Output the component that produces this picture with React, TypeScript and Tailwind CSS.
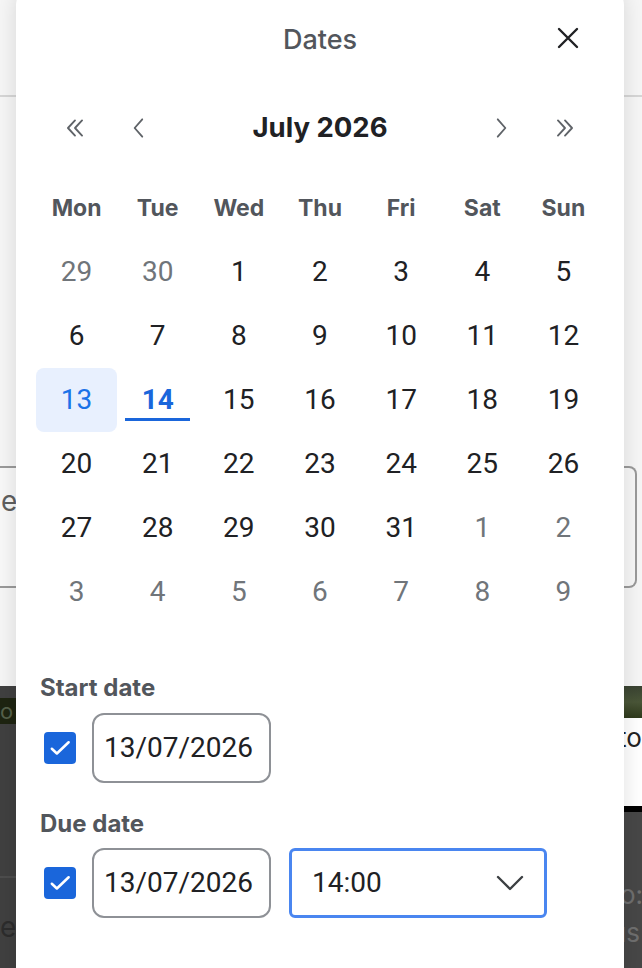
import { useState } from 'react'

type TDay = { day: number; muted?: boolean }

const weekdays = ['Mon', 'Tue', 'Wed', 'Thu', 'Fri', 'Sat', 'Sun']

// July 2026 starts on a Wednesday, padded with June / August days
function buildMonth(): TDay[] {
  const days: TDay[] = [{ day: 29, muted: true }, { day: 30, muted: true }]
  for (let d = 1; d <= 31; d++) days.push({ day: d })
  let next = 1
  while (days.length < 42) days.push({ day: next++, muted: true })
  return days
}

function Chevron({ dir, double }: { dir: 'left' | 'right'; double?: boolean }) {
  const flip = dir === 'right' ? 'scale(-1,1) translate(-24,0)' : undefined
  return (
    <svg width="26" height="26" viewBox="0 0 24 24" fill="none" stroke="#5f6368" strokeWidth="1.7" strokeLinecap="round" strokeLinejoin="round">
      <g transform={flip}>
        {double ? (
          <path d="M12 5l-6.5 7 6.5 7M18.5 5L12 12l6.5 7" />
        ) : (
          <path d="M15 4l-7 8 7 8" />
        )}
      </g>
    </svg>
  )
}

function Checkbox({ checked, onToggle }: { checked: boolean; onToggle: () => void }) {
  return (
    <button
      type="button"
      onClick={onToggle}
      className={`w-[32px] h-[32px] rounded-[4px] flex items-center justify-center shrink-0 ${checked ? 'bg-[#1a66db]' : 'border-2 border-[#5f6368] bg-white'}`}
    >
      {checked && (
        <svg width="24" height="24" viewBox="0 0 20 20" fill="none" stroke="white" strokeWidth="2.1" strokeLinecap="round" strokeLinejoin="round">
          <path d="M3.2 10.6l4.2 4L17.2 5.2" />
        </svg>
      )}
    </button>
  )
}

function DateBox({ value }: { value: string }) {
  return (
    <div className="w-[179px] h-[70px] rounded-[12px] border-2 border-[#8e9196] flex items-center pl-[10px] text-[28px] text-[#202124] font-['Roboto',sans-serif]">
      {value}
    </div>
  )
}

export default function App() {
  const [startOn, setStartOn] = useState(true)
  const [dueOn, setDueOn] = useState(true)
  const days = buildMonth()

  return (
    <div className="relative w-[642px] h-[968px] overflow-hidden flex bg-[#f6f6f6] font-['Inter',sans-serif]">
      {/* page behind the dialog, left edge */}
      <div className="w-[16px] flex flex-col">
        <div className="h-[95px] bg-[#f6f6f6]" />
        <div className="h-[2px] bg-[#d6d6d6]" />
        <div className="h-[369px] bg-[#f6f6f6]" />
        <div className="h-[122px] border-y-2 border-[#9a9a9a] bg-[#f8f8f8] pt-[18px] text-[28px] leading-[30px] text-[#5f5f5f] overflow-hidden">
          <span className="ml-[1px]">e</span>
        </div>
        <div className="h-[98px] bg-[#f6f6f6]" />
        <div className="flex-1 flex flex-col bg-[#404040]">
          <div className="mt-[12px] h-[26px] bg-[#1e2411] text-[22px] leading-[26px] text-[#55604a] overflow-hidden">o</div>
          <div className="h-[152px]" />
          <div className="h-[2px] bg-[#4d4d4d]" />
          <div className="mt-[34px] text-[28px] leading-[30px] text-[#2c2c2c]">e</div>
        </div>
      </div>

      <div className="flex-1" />

      {/* page behind the dialog, right edge */}
      <div className="w-[18px] flex flex-col">
        <div className="h-[95px] bg-[#f6f6f6]" />
        <div className="h-[2px] bg-[#d6d6d6]" />
        <div className="h-[369px] bg-[#f6f6f6]" />
        <div className="h-[122px] w-[13px] border-y-2 border-r-2 border-[#9a9a9a] rounded-r-[8px] bg-[#f8f8f8]" />
        <div className="h-[98px] bg-[#f6f6f6]" />
        <div className="h-[32px] bg-gradient-to-b from-[#3a4332] via-[#4a5638] to-[#2f3a1c]" />
        <div className="h-[88px] bg-white text-[26px] leading-[40px] text-[#222] overflow-hidden whitespace-nowrap">
          <span className="-ml-[6px]">to</span>
        </div>
        <div className="h-[6px] bg-black" />
        <div className="flex-1 bg-[#474747] text-[26px] text-[#6f6f6f] overflow-hidden whitespace-nowrap">
          <div className="mt-[68px] leading-[30px] -ml-[4px]">o:</div>
          <div className="mt-[8px] leading-[30px] -ml-[4px]">ıs</div>
        </div>
      </div>

      {/* dialog */}
      <div className="absolute left-[16px] top-[-11px] w-[608px] h-[1000px] bg-white rounded-[16px] shadow-[0_0_22px_rgba(0,0,0,0.13)] flex flex-col">
        <div className="relative h-[102px] flex items-center justify-center">
          <h2 className="text-[27px] font-medium text-[#52565c]">Dates</h2>
          <button type="button" className="absolute right-[42px] top-[35px] w-[28px] h-[28px] flex items-center justify-center">
            <svg width="22" height="22" viewBox="0 0 22 22" fill="none" stroke="#202124" strokeWidth="2.4" strokeLinecap="round">
              <path d="M2 2l18 18M20 2L2 20" />
            </svg>
          </button>
        </div>

        <div className="mt-[5px] h-16 px-[27px] flex items-center">
          <button type="button" className="w-16 h-16 flex items-center justify-center"><Chevron dir="left" double /></button>
          <button type="button" className="w-16 h-16 flex items-center justify-center"><Chevron dir="left" /></button>
          <div className="flex-1 text-center text-[27.5px] font-bold text-[#202124]">July 2026</div>
          <button type="button" className="w-16 h-16 flex items-center justify-center"><Chevron dir="right" /></button>
          <button type="button" className="w-16 h-16 flex items-center justify-center"><Chevron dir="right" double /></button>
        </div>

        <div className="mt-4 px-5 grid grid-cols-7">
          {weekdays.map(w => (
            <div key={w} className="h-16 flex items-center justify-center text-[23px] font-bold text-[#52565c]">{w}</div>
          ))}
          {days.map((d, i) => {
            const selected = !d.muted && d.day === 13
            const today = !d.muted && d.day === 14
            return (
              <div
                key={i}
                className={`relative h-16 flex items-center justify-center text-[28px] font-['Roboto',sans-serif] ${selected ? 'bg-[#e8f0fe] rounded-[8px] text-[#1a73e8]' : ''} ${today ? 'text-[#1a66db] font-bold' : ''} ${d.muted ? 'text-[#70757a]' : ''} ${!selected && !today && !d.muted ? 'text-[#202124]' : ''}`}
              >
                {d.day}
                {today && <span className="absolute left-2 right-2 bottom-[11px] h-[3px] bg-[#1a66db]" />}
              </div>
            )
          })}
        </div>

        <div className="mt-[52px] px-6 text-[24px] leading-[24px] font-bold text-[#52565c]">Start date</div>
        <div className="mt-[13px] pl-[28px] flex items-center gap-4">
          <Checkbox checked={startOn} onToggle={() => setStartOn(!startOn)} />
          <DateBox value="13/07/2026" />
        </div>

        <div className="mt-[29px] px-6 text-[24px] leading-[24px] font-bold text-[#52565c]">Due date</div>
        <div className="mt-[12px] pl-[28px] flex items-center gap-4">
          <Checkbox checked={dueOn} onToggle={() => setDueOn(!dueOn)} />
          <DateBox value="13/07/2026" />
          <div className="ml-[2px] w-[258px] h-[70px] rounded-[6px] border-[3px] border-[#4a86f0] flex items-center justify-between pl-[20px] pr-[20px] text-[28px] text-[#202124] font-['Roboto',sans-serif]">
            <span>14:00</span>
            <svg width="28" height="16" viewBox="0 0 28 16" fill="none" stroke="#3c4043" strokeWidth="2.4" strokeLinecap="round" strokeLinejoin="round">
              <path d="M2 2l12 12L26 2" />
            </svg>
          </div>
        </div>
      </div>
    </div>
  )
}
